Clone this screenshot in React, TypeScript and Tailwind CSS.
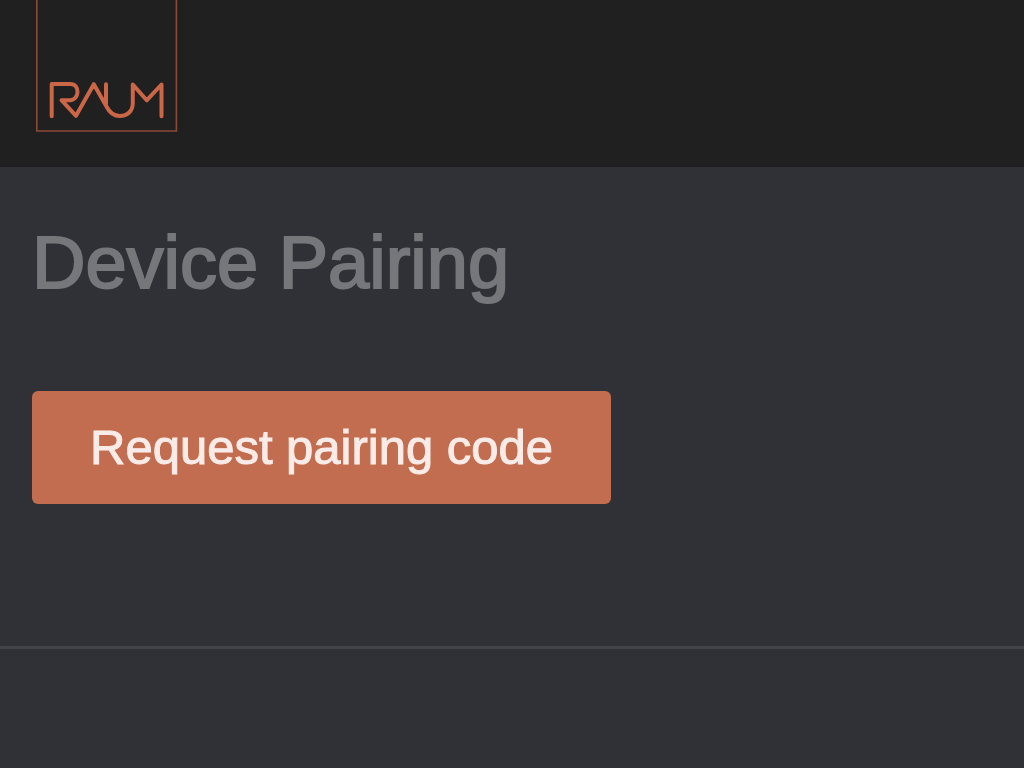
import React from 'react';

function RaumLogo() {
  return (
    <svg width="142" height="132" viewBox="0 0 142 132" fill="none" role="img" aria-label="RAUM">
      <path d="M.8 -2V131H140.400V-2" stroke="#8b4a37" strokeWidth="1.6" />
      <g stroke="#cb6646" strokeWidth="4" strokeLinejoin="round" strokeLinecap="round">
        <path d="M15.700 116.300V84H34.500C39 84 41.500 87.500 41.500 92C41.500 96.500 38.500 100.200 34 100.200H25.500L40 115.800L57.800 84.200L70.500 106.500C73.500 112.500 78 116 83.700 116C91.500 116 96.800 111 96.800 103V84.500L110.700 100.300L125.500 84.500V116.300" />
        <path d="M70 84.200V104" />
      </g>
    </svg>
  );
}

interface PairingButtonProps {
  label: string;
}

function PairingButton({ label }: PairingButtonProps) {
  return (
    <button
      type="button"
      className="rounded-md bg-[#c26d4f] px-[58px] py-7 text-[49px] leading-[57px] whitespace-nowrap text-[#f9ece8] [-webkit-text-stroke:1px]"
    >
      {label}
    </button>
  );
}

export default function App() {
  return (
    <div className="min-h-screen bg-[#2f3136] font-['Liberation_Sans',Arial,sans-serif]">
      <header className="bg-[#202020] px-9 pb-[35px]">
        <a href="#" className="inline-block align-top">
          <RaumLogo />
        </a>
      </header>

      <main>
        <section className="border-b-[3px] border-[#434449] px-8 pt-12 pb-[142px]">
          <h1 className="mb-20 text-[74px] leading-24 text-[#76777b] [-webkit-text-stroke:2px]">
            Device Pairing
          </h1>
          <PairingButton label="Request pairing code" />
        </section>
      </main>
    </div>
  );
}
